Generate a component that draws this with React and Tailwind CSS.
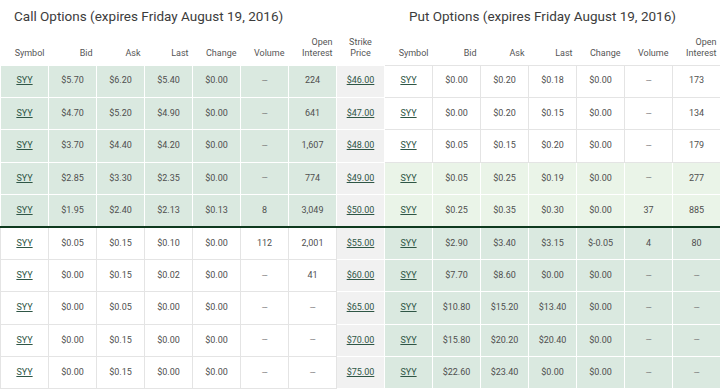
import React from "react";

const calls = [
  ["$5.70", "$6.20", "$5.40", "$0.00", "---", "224"],
  ["$4.70", "$5.20", "$4.90", "$0.00", "---", "641"],
  ["$3.70", "$4.40", "$4.20", "$0.00", "---", "1,607"],
  ["$2.85", "$3.30", "$2.35", "$0.00", "---", "774"],
  ["$1.95", "$2.40", "$2.13", "$0.13", "8", "3,049"],
  ["$0.05", "$0.15", "$0.10", "$0.00", "112", "2,001"],
  ["$0.00", "$0.15", "$0.02", "$0.00", "---", "41"],
  ["$0.00", "$0.05", "$0.00", "$0.00", "---", "---"],
  ["$0.00", "$0.15", "$0.00", "$0.00", "---", "---"],
  ["$0.00", "$0.15", "$0.00", "$0.00", "---", "---"],
];
const strikes = ["$46.00", "$47.00", "$48.00", "$49.00", "$50.00", "$55.00", "$60.00", "$65.00", "$70.00", "$75.00"];
const puts = [
  ["$0.00", "$0.20", "$0.18", "$0.00", "---", "173"],
  ["$0.00", "$0.20", "$0.15", "$0.00", "---", "134"],
  ["$0.05", "$0.15", "$0.20", "$0.00", "---", "179"],
  ["$0.05", "$0.25", "$0.19", "$0.00", "---", "277"],
  ["$0.25", "$0.35", "$0.30", "$0.00", "37", "885"],
  ["$2.90", "$3.40", "$3.15", "$-0.05", "4", "80"],
  ["$7.70", "$8.60", "$0.00", "$0.00", "---", "---"],
  ["$10.80", "$15.20", "$13.40", "$0.00", "---", "---"],
  ["$15.80", "$20.20", "$20.40", "$0.00", "---", "---"],
  ["$22.60", "$23.40", "$0.00", "$0.00", "---", "---"],
];

const headCell = "pr-[4px] pb-[6px] text-right align-bottom font-normal text-[9px] leading-[11px] text-[#555]";

function Cells({ vals, tone }) {
  const bg =
    tone === "green" ? "bg-[#dae9e0] border-white" : tone === "light" ? "bg-[#eaf4e8] border-white" : "bg-white border-[#e4e4e4]";
  return (
    <>
      <td className={`border ${bg} text-center`}>
        <a className="text-[#2f5646] underline">SYY</a>
      </td>
      {vals.map((v, i) => (
        <td key={i} className={`border ${bg} text-center ${v === "---" ? "text-[8px] text-[#666] tracking-[-0.5px]" : ""}`}>
          {v}
        </td>
      ))}
    </>
  );
}

export default function App() {
  return (
    <div className="w-[720px] h-[389px] overflow-hidden bg-white" style={{ fontFamily: "Roboto, 'Liberation Sans', sans-serif" }}>
      <div className="flex h-[33px] items-center text-[13.5px] text-[#3c3c3c]">
        <div className="w-[395px] pl-[14px]">Call Options (expires Friday August 19, 2016)</div>
        <div className="pl-[14px]">Put Options (expires Friday August 19, 2016)</div>
      </div>
      <table className="w-[720px] table-fixed border-collapse text-[9px] text-[#4f4f4f]">
        <colgroup>
          {Array.from({ length: 15 }).map((_, i) => (
            <col key={i} className="w-[48px]" />
          ))}
        </colgroup>
        <thead>
          <tr className="h-[32px] border-b border-[#e4e4e4]">
            <th className={headCell}>Symbol</th>
            <th className={headCell}>Bid</th>
            <th className={headCell}>Ask</th>
            <th className={headCell}>Last</th>
            <th className={headCell}>Change</th>
            <th className={headCell}>Volume</th>
            <th className={headCell}>Open<br />Interest</th>
            <th className="pb-[6px] text-center align-bottom font-normal text-[9px] leading-[11px] text-[#555]">Strike<br />Price</th>
            <th className={headCell}>Symbol</th>
            <th className={headCell}>Bid</th>
            <th className={headCell}>Ask</th>
            <th className={headCell}>Last</th>
            <th className={headCell}>Change</th>
            <th className={headCell}>Volume</th>
            <th className={headCell}>Open<br />Interest</th>
          </tr>
        </thead>
        <tbody>
          {calls.map((c, r) => (
            <tr key={r} className={`h-[32.4px] ${r === 5 ? "border-t-2 border-t-[#0f3b1f]" : ""}`}>
              <Cells vals={c} tone={r < 5 ? "green" : "white"} />
              <td className="border border-white bg-[#f1f1f1] text-center">
                <a className="text-[#2f5646] underline">{strikes[r]}</a>
              </td>
              <Cells vals={puts[r]} tone={r < 3 ? "white" : r < 5 ? "light" : "green"} />
            </tr>
          ))}
        </tbody>
      </table>
    </div>
  );
}
